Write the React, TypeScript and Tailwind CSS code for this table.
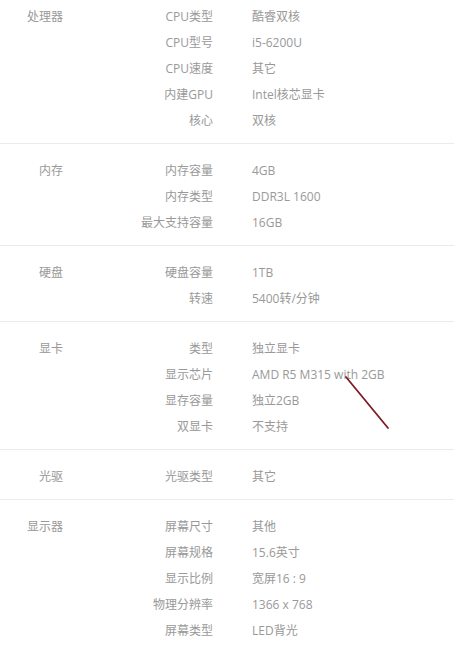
import React from 'react';

// ----------------------------- Data ------------------------------------
interface Spec {
  label: string;
  value: string;
}
interface Section {
  name: string;
  specs: Spec[];
}

const sections: Section[] = [
  {
    name: '处理器',
    specs: [
      { label: 'CPU类型', value: '酷睿双核' },
      { label: 'CPU型号', value: 'i5-6200U' },
      { label: 'CPU速度', value: '其它' },
      { label: '内建GPU', value: 'Intel核芯显卡' },
      { label: '核心', value: '双核' },
    ],
  },
  {
    name: '内存',
    specs: [
      { label: '内存容量', value: '4GB' },
      { label: '内存类型', value: 'DDR3L 1600' },
      { label: '最大支持容量', value: '16GB' },
    ],
  },
  {
    name: '硬盘',
    specs: [
      { label: '硬盘容量', value: '1TB' },
      { label: '转速', value: '5400转/分钟' },
    ],
  },
  {
    name: '显卡',
    specs: [
      { label: '类型', value: '独立显卡' },
      { label: '显示芯片', value: 'AMD R5 M315 with 2GB' },
      { label: '显存容量', value: '独立2GB' },
      { label: '双显卡', value: '不支持' },
    ],
  },
  {
    name: '光驱',
    specs: [{ label: '光驱类型', value: '其它' }],
  },
  {
    name: '显示器',
    specs: [
      { label: '屏幕尺寸', value: '其他' },
      { label: '屏幕规格', value: '15.6英寸' },
      { label: '显示比例', value: '宽屏16 : 9' },
      { label: '物理分辨率', value: '1366 x 768' },
      { label: '屏幕类型', value: 'LED背光' },
    ],
  },
];

// ---------------------------- Section block ------------------------------
const SpecSection = ({ section, first }: { section: Section; first: boolean }) => (
  <div className={`flex border-b border-[#ebebeb] pb-[9px] ${first ? 'pt-[4px]' : 'pt-[14px]'}`}>
    <div className="w-[63px] shrink-0 text-right h-[26px] leading-[26px]">{section.name}</div>
    <div className="flex-1">
      {section.specs.map((s) => (
        <div key={s.label} className="flex h-[26px] leading-[26px]">
          <div className="w-[150px] shrink-0 text-right">{s.label}</div>
          <div className="pl-[39px] whitespace-nowrap">{s.value}</div>
        </div>
      ))}
    </div>
  </div>
);

export default function App() {
  return (
    <div
      className="relative w-[454px] h-[651px] overflow-hidden bg-white text-[12px] text-[#999999]"
      style={{ fontFamily: '"Open Sans", "Noto Sans CJK SC", sans-serif' }}
    >
      {sections.map((s, i) => (
        <SpecSection key={s.name} section={s} first={i === 0} />
      ))}

      {/* hand-drawn annotation line */}
      <svg className="absolute left-0 top-0 pointer-events-none" width="454" height="651">
        <path d="M346 377 L388 428" stroke="#7d1c24" strokeWidth="1.8" fill="none" strokeLinecap="round" />
      </svg>
    </div>
  );
}
